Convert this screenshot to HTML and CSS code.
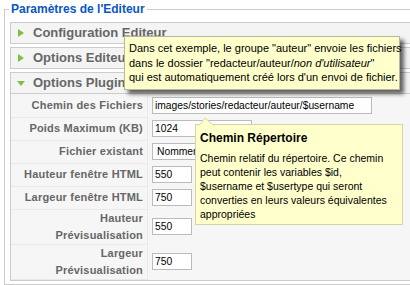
FILE: index.html
```html
<!DOCTYPE html>
<html>
<head>
	<title>Paramètres de l'Editeur</title>
	<meta charset="utf-8">
	<link rel="stylesheet" href="styles.css">
</head>
<body>
	<fieldset class="adminform">
		<legend>Paramètres de l'Editeur</legend>

		<div class="panel">
			<h3 class="toggler">Configuration Editeur</h3>
		</div>
		<div class="panel">
			<h3 class="toggler">Options Editeur</h3>
		</div>
		<div class="panel open">
			<h3 class="toggler">Options Plugins</h3>
			<table class="paramlist">
				<tr>
					<td class="key">Chemin des Fichiers</td>
					<td class="value"><input class="text wide" type="text" value="images/stories/redacteur/auteur/$username"></td>
				</tr>
				<tr>
					<td class="key">Poids Maximum (KB)</td>
					<td class="value"><input class="text medium" type="text" value="1024"></td>
				</tr>
				<tr>
					<td class="key">Fichier existant</td>
					<td class="value">
						<select class="text medium">
							<option selected>Nommer un nouveau</option>
							<option>Remplacer</option>
						</select>
					</td>
				</tr>
				<tr>
					<td class="key">Hauteur fenêtre HTML</td>
					<td class="value"><input class="text small" type="text" value="550"></td>
				</tr>
				<tr>
					<td class="key">Largeur fenêtre HTML</td>
					<td class="value"><input class="text small" type="text" value="750"></td>
				</tr>
				<tr>
					<td class="key">Hauteur<br>Prévisualisation</td>
					<td class="value"><input class="text small" type="text" value="550"></td>
				</tr>
				<tr>
					<td class="key">Largeur<br>Prévisualisation</td>
					<td class="value"><input class="text small" type="text" value="750"></td>
				</tr>
			</table>
		</div>
	</fieldset>

	<div class="tip tip-note">
		Dans cet exemple, le groupe "auteur" envoie les fichiers<br>
		dans le dossier "redacteur/auteur/<i>non d'utilisateur</i>"<br>
		qui est automatiquement créé lors d'un envoi de fichier.
	</div>

	<div class="tip tip-help">
		<svg class="tip-tail" width="18" height="9" viewBox="0 0 18 9">
			<polygon points="0,9 7,1 17,9" fill="#ffffcc"></polygon>
			<polyline points="1,8.5 7,1 16,8.5" fill="none" stroke="#d6d3a4" stroke-width="1"></polyline>
		</svg>
		<div class="tip-title">Chemin Répertoire</div>
		<div class="tip-text">
			Chemin relatif du répertoire. Ce chemin<br>
			peut contenir les variables $id,<br>
			$username et $usertype qui seront<br>
			converties en leurs valeurs équivalentes<br>
			appropriées
		</div>
	</div>
</body>
</html>
```

FILE: styles.css
```css
body {
	margin: 0;
	width: 410px;
	height: 285px;
	overflow: hidden;
	position: relative;
	background-color: #fff;
	font-family: "Liberation Sans", Arial, sans-serif;
	font-size: 11px;
}

.adminform {
	margin: 2px 0 0 4px;
	padding: 6px 5px 0 5px;
	width: 470px;
	border: 1px solid #ccc;
}

.adminform legend {
	margin-left: -1px;
	padding: 0 2px;
	color: #0b55c4;
	font-size: 12px;
	font-weight: bold;
}

.panel {
	margin-bottom: 3px;
	border: 1px solid #ccc;
	background-color: #f6f6f6;
}

.toggler {
	position: relative;
	margin: 0;
	height: 20px;
	padding-left: 22px;
	line-height: 20px;
	font-size: 13px;
	font-weight: bold;
	color: #666;
	background-color: #f4f4f4;
}

.toggler::before {
	content: "";
	position: absolute;
	left: 7px;
	top: 6px;
	border-left: 6px solid #80c040;
	border-top: 4.5px solid transparent;
	border-bottom: 4.5px solid transparent;
}

.open .toggler {
	border-bottom: 1px solid #ccc;
}

.open .toggler::before {
	left: 6px;
	top: 8px;
	border-top: 5px solid #80c040;
	border-left: 4.5px solid transparent;
	border-right: 4.5px solid transparent;
	border-bottom: 0;
}

.paramlist {
	border-collapse: collapse;
	width: 100%;
}

.paramlist td {
	padding: 3px 4px;
	vertical-align: middle;
}

.paramlist td.key {
	width: 128px;
	padding-top: 0;
	padding-bottom: 0;
	text-align: right;
	line-height: 17px;
	font-weight: bold;
	letter-spacing: 0.2px;
	color: #666;
	background-color: #f6f6f6;
	border-bottom: 1px solid #e9e9e9;
	border-right: 1px solid #e9e9e9;
}

.text {
	display: block;
	box-sizing: border-box;
	height: 17px;
	margin: 0;
	padding: 0 2px;
	border: 1px solid #bbb;
	background-color: #fff;
	font-family: "Liberation Sans", Arial, sans-serif;
	font-size: 10.3px;
	color: #000;
}

select.text {
	padding: 0;
	height: 17px;
}

.wide {
	width: 220px;
}

.medium {
	width: 100px;
}

.small {
	width: 40px;
}

.tip {
	position: absolute;
	background-color: #ffffcc;
	color: #000;
	font-size: 11px;
}

.tip-note {
	left: 124px;
	top: 36px;
	width: 266px;
	padding: 4px;
	line-height: 14.5px;
	white-space: nowrap;
	border: 1px solid #b9b79a;
	box-shadow: 4px 4px 4px rgba(0, 0, 0, 0.6);
}

.tip-help {
	left: 195px;
	top: 124px;
	width: 198px;
	padding: 6px 4px 3px 4px;
	border: 1px solid #d6d3a4;
}

.tip-tail {
	position: absolute;
	left: 2px;
	top: -8px;
}

.tip-title {
	font-size: 12px;
	font-weight: bold;
	line-height: 15px;
}

.tip-text {
	margin-top: 5px;
	font-size: 10.5px;
	line-height: 14px;
	white-space: nowrap;
}
```
